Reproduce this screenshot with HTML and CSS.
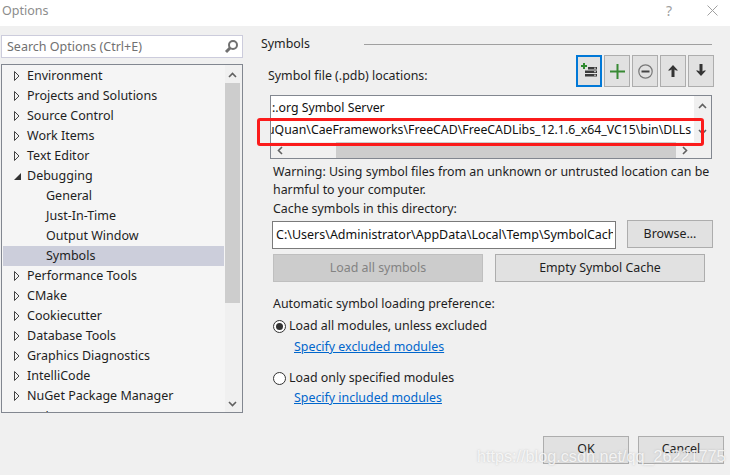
FILE: index.html
```html
<!DOCTYPE html>
<html lang="en">
<head>
<meta charset="utf-8">
<title>Options</title>
<link rel="stylesheet" href="styles.css">
</head>
<body>
<div class="dialog">
  <header class="titlebar">
    <span class="title">Options</span>
    <span class="help">?</span>
    <svg class="close" width="11" height="11" viewBox="0 0 11 11"><path d="M.5 .5l10 10M10.500 .5l-10 10" stroke="#a0a0a0" stroke-width="1" fill="none"/></svg>
  </header>
  <main class="content">
    <aside class="sidebar">
      <div class="search">
        <span>Search Options (Ctrl+E)</span>
        <svg width="15" height="15" viewBox="0 0 15 15"><circle cx="9" cy="6" r="4" fill="none" stroke="#707070" stroke-width="2"/><path d="M6 9l-4 4" stroke="#707070" stroke-width="3"/></svg>
      </div>
      <div class="tree">
        <ul class="tree-list">
          <li class="row"><svg class="tw" width="6" height="10" viewBox="0 0 6 10"><path d="M.5 .5L5 5 .5 9.500z" fill="none" stroke="#444"/></svg>Environment</li>
          <li class="row"><svg class="tw" width="6" height="10" viewBox="0 0 6 10"><path d="M.5 .5L5 5 .5 9.500z" fill="none" stroke="#444"/></svg>Projects and Solutions</li>
          <li class="row"><svg class="tw" width="6" height="10" viewBox="0 0 6 10"><path d="M.5 .5L5 5 .5 9.500z" fill="none" stroke="#444"/></svg>Source Control</li>
          <li class="row"><svg class="tw" width="6" height="10" viewBox="0 0 6 10"><path d="M.5 .5L5 5 .5 9.500z" fill="none" stroke="#444"/></svg>Work Items</li>
          <li class="row"><svg class="tw" width="6" height="10" viewBox="0 0 6 10"><path d="M.5 .5L5 5 .5 9.500z" fill="none" stroke="#444"/></svg>Text Editor</li>
          <li class="row"><svg class="tw tw-open" width="7" height="7" viewBox="0 0 7 7"><path d="M7 0v7H0z" fill="#333"/></svg>Debugging</li>
          <li class="row child">General</li>
          <li class="row child">Just-In-Time</li>
          <li class="row child">Output Window</li>
          <li class="row child selected">Symbols</li>
          <li class="row"><svg class="tw" width="6" height="10" viewBox="0 0 6 10"><path d="M.5 .5L5 5 .5 9.500z" fill="none" stroke="#444"/></svg>Performance Tools</li>
          <li class="row"><svg class="tw" width="6" height="10" viewBox="0 0 6 10"><path d="M.5 .5L5 5 .5 9.500z" fill="none" stroke="#444"/></svg>CMake</li>
          <li class="row"><svg class="tw" width="6" height="10" viewBox="0 0 6 10"><path d="M.5 .5L5 5 .5 9.500z" fill="none" stroke="#444"/></svg>Cookiecutter</li>
          <li class="row"><svg class="tw" width="6" height="10" viewBox="0 0 6 10"><path d="M.5 .5L5 5 .5 9.500z" fill="none" stroke="#444"/></svg>Database Tools</li>
          <li class="row"><svg class="tw" width="6" height="10" viewBox="0 0 6 10"><path d="M.5 .5L5 5 .5 9.500z" fill="none" stroke="#444"/></svg>Graphics Diagnostics</li>
          <li class="row"><svg class="tw" width="6" height="10" viewBox="0 0 6 10"><path d="M.5 .5L5 5 .5 9.500z" fill="none" stroke="#444"/></svg>IntelliCode</li>
          <li class="row"><svg class="tw" width="6" height="10" viewBox="0 0 6 10"><path d="M.5 .5L5 5 .5 9.500z" fill="none" stroke="#444"/></svg>NuGet Package Manager</li>
          <li class="row last"><svg class="tw" width="6" height="10" viewBox="0 0 6 10"><path d="M.5 .5L5 5 .5 9.500z" fill="none" stroke="#444"/></svg>Python</li>
        </ul>
        <div class="vscroll">
          <svg class="varrow" width="9" height="6" viewBox="0 0 9 6"><path d="M1 5l3.500-3.500L8 5" fill="none" stroke="#606060" stroke-width="1.600"/></svg>
          <div class="vthumb"></div>
          <svg class="varrow vdown" width="9" height="6" viewBox="0 0 9 6"><path d="M1 1l3.500 3.500L8 1" fill="none" stroke="#606060" stroke-width="1.600"/></svg>
        </div>
      </div>
    </aside>
    <section class="panel">
      <div class="group"><span class="group-name">Symbols</span><span class="rule"></span></div>
      <div class="loc-head">
        <span class="loc-label">Symbol file (.pdb) locations:</span>
        <div class="tools">
          <button class="tool focused"><svg width="18" height="16" viewBox="0 0 18 16"><path d="M4 0v6M1 3h6" stroke="#2f8a2f" stroke-width="2"/><path d="M8 4h9v2.500H8zM5 7.500h12V10H5zM5 11h12v2.500H5z" fill="#3a3a3a"/><path d="M14 5.200h2M14 8.700h2M14 12.200h2" stroke="#d0d0d0" stroke-width="1"/></svg></button>
          <button class="tool"><svg width="15" height="15" viewBox="0 0 15 15"><path d="M7.500 0v15M0 7.500h15" stroke="#388a34" stroke-width="2"/></svg></button>
          <button class="tool"><svg width="15" height="15" viewBox="0 0 15 15"><circle cx="7.500" cy="7.500" r="6.700" fill="none" stroke="#777" stroke-width="1.200"/><path d="M3.500 7.500h8" stroke="#444" stroke-width="2"/></svg></button>
          <button class="tool"><svg class="arrow-up" width="10" height="12" viewBox="0 0 10 12"><path d="M5 0l5 5.500H8l-1.500-1V12h-3V4.500L2 5.500H0z" fill="#333"/></svg></button>
          <button class="tool"><svg class="arrow-down" width="10" height="12" viewBox="0 0 10 12"><path d="M5 12l5-5.500H8l-1.500 1V0h-3v7.500L2 6.500H0z" fill="#333"/></svg></button>
        </div>
      </div>
      <div class="listbox">
        <div class="list-main">
          <div class="list-rows">
            <div class="list-row first">:.org Symbol Server</div>
            <div class="list-row second">uQuan\CaeFrameworks\FreeCAD\FreeCADLibs_12.1.6_x64_VC15\bin\DLLs</div>
          </div>
          <div class="hscroll">
            <svg width="6" height="9" viewBox="0 0 6 9"><path d="M5 1L1.500 4.500 5 8" fill="none" stroke="#606060" stroke-width="1.600"/></svg>
            <div class="hthumb"></div>
            <svg width="6" height="9" viewBox="0 0 6 9"><path d="M1 1l3.500 3.500L1 8" fill="none" stroke="#606060" stroke-width="1.600"/></svg>
          </div>
        </div>
        <div class="list-v">
          <svg width="9" height="6" viewBox="0 0 9 6"><path d="M1 5l3.500-3.500L8 5" fill="none" stroke="#606060" stroke-width="1.600"/></svg>
          <svg width="9" height="6" viewBox="0 0 9 6"><path d="M1 1l3.500 3.500L8 1" fill="none" stroke="#606060" stroke-width="1.600"/></svg>
        </div>
        <div class="highlight"></div>
      </div>
      <p class="warning">Warning: Using symbol files from an unknown or untrusted location can be harmful to your computer.</p>
      <div class="cache-label">Cache symbols in this directory:</div>
      <div class="cache-row">
        <div class="path"><span class="path-text">C:\Users\Administrator\AppData\Local\Temp\SymbolCache</span></div>
        <button class="btn browse">Browse...</button>
      </div>
      <div class="load-row">
        <button class="btn wide disabled">Load all symbols</button>
        <button class="btn wide">Empty Symbol Cache</button>
      </div>
      <div class="auto-label">Automatic symbol loading preference:</div>
      <div class="radio-row r1"><span class="radio checked"></span>Load all modules, unless excluded</div>
      <a class="link l1" href="#">Specify excluded modules</a>
      <div class="radio-row r2"><span class="radio"></span>Load only specified modules</div>
      <a class="link l2" href="#">Specify included modules</a>
      <div class="footer">
        <button class="btn foot">OK</button>
        <button class="btn foot">Cancel</button>
      </div>
    </section>
  </main>
  <div class="watermark">https://blog.csdn.net/qq_26221775</div>
</div>
</body>
</html>
```
FILE: styles.css
```css
* { box-sizing: border-box; }
html, body { margin: 0; padding: 0; }
body {
  width: 730px;
  height: 475px;
  overflow: hidden;
  background: #f0f0f0;
  font-family: "Noto Sans", sans-serif;
  font-size: 12.5px;
  color: #1e1e1e;
}
.dialog { position: relative; width: 730px; height: 475px; }
.titlebar {
  height: 26px;
  background: #fff;
  display: flex;
  align-items: center;
  padding: 0 12px 5px 2px;
}
.title { color: #8c8c8c; flex: 1; }
.help { color: #a0a0a0; font-size: 14px; margin-right: 35px; }
.content { display: flex; height: 449px; }
.sidebar { width: 261px; padding: 9px 0 0 1px; flex: none; }
.search {
  width: 242px;
  height: 23px;
  background: #fff;
  border: 1px solid #ccccdc;
  display: flex;
  align-items: center;
  justify-content: space-between;
  padding: 0 3px 0 5px;
  color: #717171;
}
.tree {
  width: 242px;
  height: 349px;
  margin-top: 6px;
  background: #f5f5f5;
  border: 1px solid #828790;
  display: flex;
  overflow: hidden;
}
.tree-list { list-style: none; margin: 0; padding: 1px 0 0 1px; width: 222px; flex: none; }
.row { height: 20px; display: flex; align-items: center; padding-left: 11px; line-height: 20px; white-space: nowrap; }
.last { padding-top: 2px; }
.tw { width: 6px; margin-right: 7px; flex: none; }
.tw-open { width: 7px; margin-right: 6px; }
.child { padding-left: 43px; }
.selected { background: #cccedb; }
.vscroll {
  width: 17px;
  margin-left: 1px;
  background: #f0f0f0;
  display: flex;
  flex-direction: column;
  align-items: flex-start;
  padding-top: 7px;
  height: 100%;
}
.varrow { margin-left: 3px; }
.vthumb { width: 15px; height: 220px; background: #cdcdcd; margin-top: 5px; }
.vdown { margin-top: auto; margin-bottom: 5px; }
.panel { flex: 1; padding: 8px 0 0 0; min-width: 0; font-size: 12.4px; }
.group { display: flex; align-items: center; height: 20px; }
.group-name { width: 47px; margin-top: -1px; }
.rule { width: 348px; height: 1px; background: #a0a0a0; margin-left: 56px; margin-top: 1px; }
.loc-head { display: flex; margin-top: 1px; height: 32px; }
.loc-label { margin: 13px 0 0 7px; line-height: 16px; width: 308px; flex: none; }
.tools { display: flex; gap: 2px; }
.tool {
  width: 26px;
  height: 32px;
  padding: 0;
  background: #e1e1e1;
  border: 1px solid #adadad;
  display: flex;
  align-items: center;
  justify-content: center;
}
.focused { border: 2px solid #0078d7; }
.arrow-down { margin-top: -2px; }
.listbox {
  position: relative;
  width: 442px;
  height: 64px;
  margin: 8px 0 0 9px;
  border: 1px solid #828790;
  background: #fff;
  display: flex;
}
.list-main { width: 423px; flex: none; display: flex; flex-direction: column; }
.list-rows { height: 46px; overflow: hidden; background: #fff; white-space: nowrap; font-size: 12.3px; }
.list-row { height: 21px; line-height: 21px; padding-left: 1px; color: #111; }
.first { margin-top: 1px; }
.second { margin-top: 1px; padding-left: 0; text-indent: -4px; }
.hscroll { height: 16px; display: flex; align-items: center; background: #f0f0f0; padding-left: 6px; }
.hthumb { width: 340px; height: 16px; background: #cdcdcd; margin: 0 6px 0 53px; }
.list-v { flex: 1; background: #f0f0f0; display: flex; flex-direction: column; align-items: center; padding-top: 7px; gap: 20px; }
.highlight {
  position: absolute;
  left: -14px;
  top: 22px;
  width: 447px;
  height: 28px;
  border: 3px solid #fb1b1b;
  border-radius: 3px;
}
.warning { margin: 4px 0 0 12px; width: 450px; line-height: 18px; }
.cache-label { margin: 1px 0 0 12px; line-height: 18px; height: 19px; }
.cache-row { display: flex; align-items: flex-start; margin: 2px 0 0 11px; }
.path {
  width: 344px;
  height: 28px;
  background: #fff;
  border: 1px solid #7a7a7a;
  line-height: 25px;
  padding-left: 3px;
  color: #111;
}
.path-text { display: block; width: 337px; overflow: hidden; white-space: nowrap; font-size: 12.5px; }
.btn {
  font: inherit;
  color: #1e1e1e;
  background: #e1e1e1;
  border: 1px solid #adadad;
  padding: 0 0 2px;
  height: 28px;
}
.browse { width: 86px; margin: -1px 0 0 11px; }
.load-row { display: flex; gap: 12px; margin: 5px 0 0 12px; }
.wide { width: 210px; }
.disabled { background: #cccccc; border-color: #bfbfbf; color: #838383; }
.auto-label { margin: 13px 0 0 12px; line-height: 18px; }
.radio-row { display: flex; align-items: center; margin-left: 12px; line-height: 18px; }
.r1 { margin-top: 4px; }
.r2 { margin-top: 13px; }
.radio {
  width: 13px;
  height: 13px;
  border: 1px solid #333;
  border-radius: 50%;
  background: #fff;
  margin-right: 3px;
  position: relative;
}
.checked::after {
  content: "";
  position: absolute;
  left: 2px;
  top: 2px;
  width: 7px;
  height: 7px;
  border-radius: 50%;
  background: #333;
}
.link { display: block; width: max-content; margin-left: 33px; color: #0066cc; line-height: 18px; }
.l1 { margin-top: 3px; }
.l2 { margin-top: 2px; }
.footer { display: flex; gap: 9px; margin: 29px 0 0 282px; }
.foot { width: 86px; height: 28px; padding-bottom: 3px; }
.watermark {
  position: absolute;
  left: 477px;
  top: 446px;
  font-family: "Liberation Sans", sans-serif;
  font-size: 16.2px;
  line-height: 20px;
  color: rgba(255, 255, 255, 0.78);
  text-shadow: 0 0 2px rgba(150, 150, 150, 0.5);
  white-space: nowrap;
}
```
